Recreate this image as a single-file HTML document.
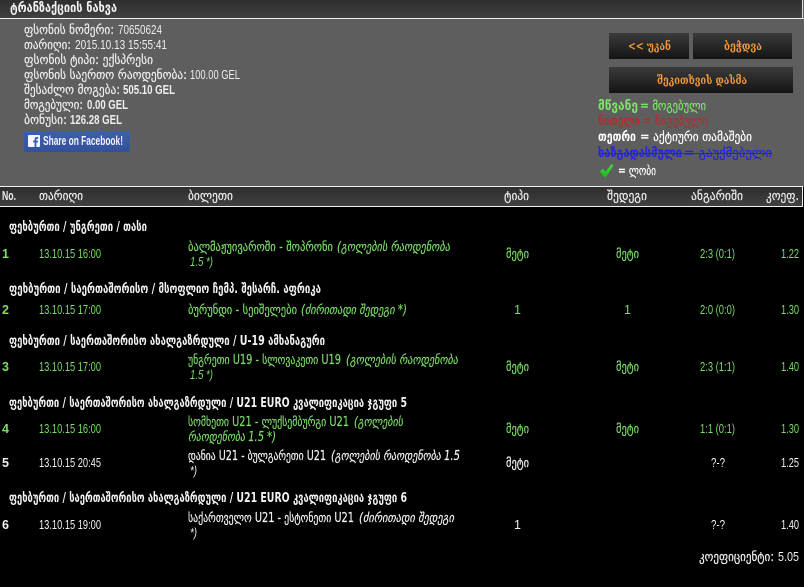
<!DOCTYPE html>
<html lang="ka"><head><meta charset="utf-8"><title>ტრანზაქციის ნახვა</title>
<style>
html,body{margin:0;padding:0;background:#000;width:804px;height:587px;overflow:hidden}
svg{display:block}
text{font-family:"DejaVu Sans",sans-serif;font-size:13px;fill:#eee;stroke:#eee;stroke-width:.2px}
.g{fill:#7bdc68;stroke:#7bdc68}
.w{fill:#f2f2f2;stroke:#f2f2f2}
.b{font-weight:bold;stroke-width:0}
.i{font-style:italic}
.l{font-family:"Liberation Sans",sans-serif;font-size:12.5px;stroke:none}
.o{fill:#f59a3a;stroke:none;font-family:"DejaVu Serif","DejaVu Sans",serif;font-weight:bold;font-size:12px}
</style></head><body>
<svg xmlns="http://www.w3.org/2000/svg" width="804" height="587" viewBox="0 0 804 587">
<defs>
<linearGradient id="btn" x1="0" y1="0" x2="0" y2="1"><stop offset="0" stop-color="#3b3b3b"/><stop offset="1" stop-color="#141414"/></linearGradient>
<linearGradient id="fb" x1="0" y1="0" x2="0" y2="1"><stop offset="0" stop-color="#3d5fb0"/><stop offset="1" stop-color="#34509a"/></linearGradient>
<linearGradient id="bar" x1="0" y1="0" x2="0" y2="1"><stop offset="0" stop-color="#2e2e2e"/><stop offset="1" stop-color="#404040"/></linearGradient>
<linearGradient id="chk" x1="0" y1="0" x2="0" y2="1"><stop offset="0" stop-color="#45e045"/><stop offset="1" stop-color="#18b418"/></linearGradient>
</defs>
<rect width="804" height="587" fill="#000"/>
<rect width="804" height="187" fill="#5e5e5e"/>
<rect width="802" height="18" fill="url(#bar)"/>
<rect y="18" width="804" height="1" fill="#f0f0f0"/>
<rect x="802" y="0" width="1" height="18" fill="#ddd"/>
<rect y="187" width="803" height="19" fill="url(#bar)"/>
<rect y="186" width="803" height="1" fill="#f0f0f0"/>
<rect y="206" width="803" height="1" fill="#f0f0f0"/>
<rect x="802" y="186" width="1" height="21" fill="#f0f0f0"/>

<text class="b w" x="10" y="12" textLength="107" lengthAdjust="spacingAndGlyphs">ტრანზაქციის ნახვა</text>

<text x="24" y="34" textLength="90" lengthAdjust="spacingAndGlyphs">ფსონის ნომერი:</text>
<text class="l" x="118" y="34" textLength="44" lengthAdjust="spacingAndGlyphs">70650624</text>
<text x="24" y="49" textLength="47" lengthAdjust="spacingAndGlyphs">თარიღი:</text>
<text class="l" x="75" y="49" textLength="92" lengthAdjust="spacingAndGlyphs">2015.10.13 15:55:41</text>
<text x="24" y="64" textLength="129" lengthAdjust="spacingAndGlyphs">ფსონის ტიპი: ექსპრესი</text>
<text x="24" y="79" textLength="163" lengthAdjust="spacingAndGlyphs">ფსონის საერთო რაოდენობა:</text>
<text class="l" x="190" y="79" textLength="50" lengthAdjust="spacingAndGlyphs">100.00 GEL</text>
<text x="24" y="94" textLength="96" lengthAdjust="spacingAndGlyphs">შესაძლო მოგება:</text>
<text class="l b" x="123" y="94" textLength="52" lengthAdjust="spacingAndGlyphs">505.10 GEL</text>
<text x="24" y="109" textLength="59" lengthAdjust="spacingAndGlyphs">მოგებული:</text>
<text class="l b" x="87" y="109" textLength="41" lengthAdjust="spacingAndGlyphs">0.00 GEL</text>
<text x="24" y="124" textLength="43" lengthAdjust="spacingAndGlyphs">ბონუსი:</text>
<text class="l b" x="70" y="124" textLength="52" lengthAdjust="spacingAndGlyphs">126.28 GEL</text>

<rect x="24" y="131" width="106" height="21" rx="1" fill="url(#fb)"/>
<rect x="28" y="135" width="12" height="12" rx="1" fill="#f4f6fb"/>
<path d="M34.6 147v-4.6h-1.5v-1.8h1.5v-1.3c0-1.5.9-2.3 2.3-2.3h1.3v1.7h-.9c-.7 0-.9.4-.9 1v.9h1.7l-.2 1.8h-1.5v4.6z" fill="#3a5aa8"/>
<text class="l b" x="43" y="145" textLength="80" lengthAdjust="spacingAndGlyphs" style="fill:#f2f4fa">Share on Facebook!</text>

<rect x="609" y="33" width="80" height="26" fill="url(#btn)"/>
<rect x="693" y="33" width="99" height="26" fill="url(#btn)"/>
<rect x="609" y="67" width="184" height="26" fill="url(#btn)"/>
<text class="o" x="628" y="50" textLength="43" lengthAdjust="spacingAndGlyphs">&lt;&lt; უკან</text>
<text class="o" x="724" y="50" textLength="38" lengthAdjust="spacingAndGlyphs">ბეჭდვა</text>
<text class="o" x="657" y="84" textLength="90" lengthAdjust="spacingAndGlyphs">შეკითხვის დასმა</text>

<text class="b" style="fill:#7fe36a" x="598" y="110" textLength="40" lengthAdjust="spacingAndGlyphs">მწვანე</text>
<text style="fill:#7fe36a;stroke:#7fe36a" x="640" y="110" textLength="66" lengthAdjust="spacingAndGlyphs">= მოგებული</text>
<text class="b" style="fill:#a83232" x="598" y="125" textLength="42" lengthAdjust="spacingAndGlyphs">წითელი</text>
<text style="fill:#a83232;stroke:#a83232" x="642" y="125" textLength="66" lengthAdjust="spacingAndGlyphs">= წაგებული</text>
<text class="b" style="fill:#fff" x="598" y="141" textLength="38" lengthAdjust="spacingAndGlyphs">თეთრი</text>
<text style="fill:#fff;stroke:#fff" x="640" y="141" textLength="112" lengthAdjust="spacingAndGlyphs">= აქტიური თამაშები</text>
<text class="b" style="fill:#2323e0" x="598" y="157" textLength="84" lengthAdjust="spacingAndGlyphs">ხაზგადასმული</text>
<text style="fill:#2323e0;stroke:#2323e0" x="684" y="157" textLength="88" lengthAdjust="spacingAndGlyphs">= გაუქმებული</text>
<rect x="598" y="153" width="174" height="1" fill="#2323c8"/>
<path d="M600 171.5l3-2.8 2.6 2.9 6-7.6 1.8 1.6-7.2 11.4h-2.4z" fill="url(#chk)"/>
<text style="fill:#fff;stroke:#fff" x="618" y="175" textLength="38" lengthAdjust="spacingAndGlyphs">= ლობი</text>

<text class="l b" x="2" y="200" textLength="14" lengthAdjust="spacingAndGlyphs">No.</text>
<text x="39" y="200" textLength="44" lengthAdjust="spacingAndGlyphs">თარიღი</text>
<text x="188" y="200" textLength="45" lengthAdjust="spacingAndGlyphs">ბილეთი</text>
<text x="504" y="200" textLength="25" lengthAdjust="spacingAndGlyphs">ტიპი</text>
<text x="607" y="200" textLength="40" lengthAdjust="spacingAndGlyphs">შედეგი</text>
<text x="691" y="200" textLength="52" lengthAdjust="spacingAndGlyphs">ანგარიში</text>
<text x="766" y="200" textLength="33" lengthAdjust="spacingAndGlyphs">კოეფ.</text>

<text class="b w" x="9" y="231" textLength="138" lengthAdjust="spacingAndGlyphs">ფეხბურთი / უნგრეთი / თასი</text>
<text class="b w" x="9" y="293" textLength="312" lengthAdjust="spacingAndGlyphs">ფეხბურთი / საერთაშორისო / მსოფლიო ჩემპ. შესარჩ. აფრიკა</text>
<text class="b w" x="9" y="345" textLength="316" lengthAdjust="spacingAndGlyphs">ფეხბურთი / საერთაშორისო ახალგაზრდული / U-19 ამხანაგური</text>
<text class="b w" x="9" y="407" textLength="398" lengthAdjust="spacingAndGlyphs">ფეხბურთი / საერთაშორისო ახალგაზრდული / U21 EURO კვალიფიკაცია ჯგუფი 5</text>
<text class="b w" x="9" y="502" textLength="398" lengthAdjust="spacingAndGlyphs">ფეხბურთი / საერთაშორისო ახალგაზრდული / U21 EURO კვალიფიკაცია ჯგუფი 6</text>

<!-- row 1 -->
<text class="l b g" x="2" y="258">1</text>
<text class="l g" x="39" y="258" textLength="62" lengthAdjust="spacingAndGlyphs">13.10.15 16:00</text>
<text class="g" x="188" y="251" textLength="145" lengthAdjust="spacingAndGlyphs">ბალმაჟუივაროში - შოპრონი</text>
<text class="g i" x="337" y="251" textLength="113" lengthAdjust="spacingAndGlyphs">(გოლების რაოდენობა</text>
<text class="l g i" x="190" y="266" textLength="23" lengthAdjust="spacingAndGlyphs">1.5 *)</text>
<text class="g" x="506" y="258" textLength="23" lengthAdjust="spacingAndGlyphs">მეტი</text>
<text class="g" x="616" y="258" textLength="23" lengthAdjust="spacingAndGlyphs">მეტი</text>
<text class="l g" x="700" y="258" textLength="35" lengthAdjust="spacingAndGlyphs">2:3 (0:1)</text>
<text class="l g" x="781" y="258" textLength="18" lengthAdjust="spacingAndGlyphs">1.22</text>

<!-- row 2 -->
<text class="l b g" x="2" y="314">2</text>
<text class="l g" x="39" y="314" textLength="62" lengthAdjust="spacingAndGlyphs">13.10.15 17:00</text>
<text class="g" x="188" y="314" textLength="109" lengthAdjust="spacingAndGlyphs">ბურუნდი - სეიშელები</text>
<text class="g i" x="301" y="314" textLength="106" lengthAdjust="spacingAndGlyphs">(ძირითადი შედეგი *)</text>
<text class="l g" x="514" y="314">1</text>
<text class="l g" x="624" y="314">1</text>
<text class="l g" x="700" y="314" textLength="35" lengthAdjust="spacingAndGlyphs">2:0 (0:0)</text>
<text class="l g" x="781" y="314" textLength="18" lengthAdjust="spacingAndGlyphs">1.30</text>

<!-- row 3 -->
<text class="l b g" x="2" y="371">3</text>
<text class="l g" x="39" y="371" textLength="62" lengthAdjust="spacingAndGlyphs">13.10.15 17:00</text>
<text class="g" x="188" y="364" textLength="153" lengthAdjust="spacingAndGlyphs">უნგრეთი U19 - სლოვაკეთი U19</text>
<text class="g i" x="346" y="364" textLength="112" lengthAdjust="spacingAndGlyphs">(გოლების რაოდენობა</text>
<text class="l g i" x="190" y="379" textLength="23" lengthAdjust="spacingAndGlyphs">1.5 *)</text>
<text class="g" x="506" y="371" textLength="23" lengthAdjust="spacingAndGlyphs">მეტი</text>
<text class="g" x="616" y="371" textLength="23" lengthAdjust="spacingAndGlyphs">მეტი</text>
<text class="l g" x="700" y="371" textLength="35" lengthAdjust="spacingAndGlyphs">2:3 (1:1)</text>
<text class="l g" x="781" y="371" textLength="18" lengthAdjust="spacingAndGlyphs">1.40</text>

<!-- row 4 -->
<text class="l b g" x="2" y="433">4</text>
<text class="l g" x="39" y="433" textLength="62" lengthAdjust="spacingAndGlyphs">13.10.15 16:00</text>
<text class="g" x="188" y="426" textLength="161" lengthAdjust="spacingAndGlyphs">სომხეთი U21 - ლუქსემბურგი U21</text>
<text class="g i" x="354" y="426" textLength="49" lengthAdjust="spacingAndGlyphs">(გოლების</text>
<text class="g i" x="188" y="441" textLength="88" lengthAdjust="spacingAndGlyphs">რაოდენობა 1.5 *)</text>
<text class="g" x="506" y="433" textLength="23" lengthAdjust="spacingAndGlyphs">მეტი</text>
<text class="g" x="616" y="433" textLength="23" lengthAdjust="spacingAndGlyphs">მეტი</text>
<text class="l g" x="700" y="433" textLength="35" lengthAdjust="spacingAndGlyphs">1:1 (0:1)</text>
<text class="l g" x="781" y="433" textLength="18" lengthAdjust="spacingAndGlyphs">1.30</text>

<!-- row 5 -->
<text class="l b w" x="2" y="467">5</text>
<text class="l w" x="39" y="467" textLength="62" lengthAdjust="spacingAndGlyphs">13.10.15 20:45</text>
<text class="w" x="188" y="460" textLength="138" lengthAdjust="spacingAndGlyphs">დანია U21 - ბულგარეთი U21</text>
<text class="w i" x="331" y="460" textLength="129" lengthAdjust="spacingAndGlyphs">(გოლების რაოდენობა 1.5</text>
<text class="l w i" x="190" y="475" textLength="7" lengthAdjust="spacingAndGlyphs">*)</text>
<text class="w" x="506" y="467" textLength="23" lengthAdjust="spacingAndGlyphs">მეტი</text>
<text class="l w" x="711" y="467" textLength="14" lengthAdjust="spacingAndGlyphs">?-?</text>
<text class="l w" x="781" y="467" textLength="18" lengthAdjust="spacingAndGlyphs">1.25</text>

<!-- row 6 -->
<text class="l b w" x="2" y="529">6</text>
<text class="l w" x="39" y="529" textLength="62" lengthAdjust="spacingAndGlyphs">13.10.15 19:00</text>
<text class="w" x="188" y="522" textLength="166" lengthAdjust="spacingAndGlyphs">საქართველო U21 - ესტონეთი U21</text>
<text class="w i" x="359" y="522" textLength="95" lengthAdjust="spacingAndGlyphs">(ძირითადი შედეგი</text>
<text class="l w i" x="190" y="537" textLength="7" lengthAdjust="spacingAndGlyphs">*)</text>
<text class="l w" x="514" y="529">1</text>
<text class="l w" x="711" y="529" textLength="14" lengthAdjust="spacingAndGlyphs">?-?</text>
<text class="l w" x="781" y="529" textLength="18" lengthAdjust="spacingAndGlyphs">1.40</text>

<text class="w" x="699" y="561" textLength="75" lengthAdjust="spacingAndGlyphs">კოეფიციენტი:</text>
<text class="l w" x="778" y="561" textLength="21" lengthAdjust="spacingAndGlyphs">5.05</text>
</svg>
</body></html>
